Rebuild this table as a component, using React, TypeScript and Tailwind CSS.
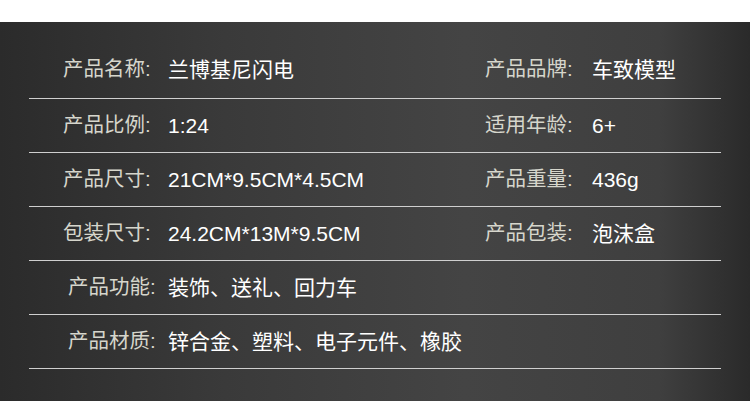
const rows: { label: string; value: string; label2?: string; value2?: string; indent?: boolean }[] = [
  { label: "产品名称:", value: "兰博基尼闪电", label2: "产品品牌:", value2: "车致模型" },
  { label: "产品比例:", value: "1:24", label2: "适用年龄:", value2: "6+" },
  { label: "产品尺寸:", value: "21CM*9.5CM*4.5CM", label2: "产品重量:", value2: "436g" },
  { label: "包装尺寸:", value: "24.2CM*13M*9.5CM", label2: "产品包装:", value2: "泡沫盒" },
  { label: "产品功能:", value: "装饰、送礼、回力车", indent: true },
  { label: "产品材质:", value: "锌合金、塑料、电子元件、橡胶", indent: true },
];

const App = () => {
  return (
    <div className="w-[750px] h-[416px] bg-white pt-[22px] font-['Liberation_Sans','Noto_Sans_CJK_SC',sans-serif]">
      <div className="h-[379px] pt-[22px] px-[29px] bg-[linear-gradient(90deg,#2b2b2b_0%,#3a3a3a_30%,#444444_62%,#3f3f3f_88%,#2a2a2a_100%)]">
        {rows.map((row, i) => (
          <div
            key={row.label}
            className={`${i === 0 ? "h-[55px] pb-[3px]" : "h-[54px]"} w-[692px] flex items-center border-b border-[#cfcfcf] leading-none`}
          >
            <div className={`flex items-center w-[456px] ${row.indent ? "pl-[39px]" : "pl-[34px]"}`}>
              <span className={`${row.indent ? "w-[100px]" : "w-[105px]"} text-[20.5px] text-[#d6d6cc]`}>{row.label}</span>
              <span className="text-[21px] text-white">{row.value}</span>
            </div>
            {row.label2 && (
              <div className="flex items-center">
                <span className="w-[107px] text-[20.5px] text-[#d6d6cc]">{row.label2}</span>
                <span className="text-[21px] text-white">{row.value2}</span>
              </div>
            )}
          </div>
        ))}
      </div>
    </div>
  );
};

export default App;
